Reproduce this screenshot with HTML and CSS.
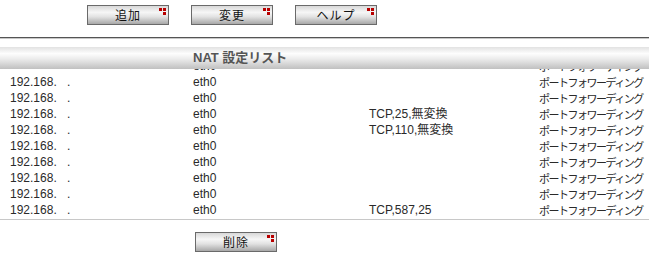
FILE: index.html
```html
<!DOCTYPE html>
<html>
<head>
<meta charset="utf-8">
<link rel="stylesheet" href="styles.css">
</head>
<body>
<div class="toolbar">
  <button class="btn"><span class="lbl">追加</span><svg class="mark" viewBox="0 0 7 7" width="7" height="7"><rect x="0" y="0" width="3" height="3"/><rect x="4" y="0" width="3" height="3"/><rect x="4" y="4" width="3" height="3"/></svg></button>
  <button class="btn"><span class="lbl">変更</span><svg class="mark" viewBox="0 0 7 7" width="7" height="7"><rect x="0" y="0" width="3" height="3"/><rect x="4" y="0" width="3" height="3"/><rect x="4" y="4" width="3" height="3"/></svg></button>
  <button class="btn"><span class="lbl">ヘルプ</span><svg class="mark" viewBox="0 0 7 7" width="7" height="7"><rect x="0" y="0" width="3" height="3"/><rect x="4" y="0" width="3" height="3"/><rect x="4" y="4" width="3" height="3"/></svg></button>
</div>
<div class="rule"></div>
<div class="list">
  <div class="list-head"><span class="title">NAT 設定リスト</span></div>
  <div class="rows">
    <div class="row"><span class="ip"></span><span class="if">eth0</span><span class="pr"></span><span class="ty">ポートフォワーディング</span></div>
    <div class="row"><span class="ip"><span class="oct">192.168.</span>.</span><span class="if">eth0</span><span class="pr"></span><span class="ty">ポートフォワーディング</span></div>
    <div class="row"><span class="ip"><span class="oct">192.168.</span>.</span><span class="if">eth0</span><span class="pr"></span><span class="ty">ポートフォワーディング</span></div>
    <div class="row"><span class="ip"><span class="oct">192.168.</span>.</span><span class="if">eth0</span><span class="pr">TCP,25,無変換</span><span class="ty">ポートフォワーディング</span></div>
    <div class="row"><span class="ip"><span class="oct">192.168.</span>.</span><span class="if">eth0</span><span class="pr">TCP,110,無変換</span><span class="ty">ポートフォワーディング</span></div>
    <div class="row"><span class="ip"><span class="oct">192.168.</span>.</span><span class="if">eth0</span><span class="pr"></span><span class="ty">ポートフォワーディング</span></div>
    <div class="row"><span class="ip"><span class="oct">192.168.</span>.</span><span class="if">eth0</span><span class="pr"></span><span class="ty">ポートフォワーディング</span></div>
    <div class="row"><span class="ip"><span class="oct">192.168.</span>.</span><span class="if">eth0</span><span class="pr"></span><span class="ty">ポートフォワーディング</span></div>
    <div class="row"><span class="ip"><span class="oct">192.168.</span>.</span><span class="if">eth0</span><span class="pr"></span><span class="ty">ポートフォワーディング</span></div>
    <div class="row"><span class="ip"><span class="oct">192.168.</span>.</span><span class="if">eth0</span><span class="pr">TCP,587,25</span><span class="ty">ポートフォワーディング</span></div>
  </div>
</div>
<div class="footer">
  <button class="btn"><span class="lbl">削除</span><svg class="mark" viewBox="0 0 7 7" width="7" height="7"><rect x="0" y="0" width="3" height="3"/><rect x="4" y="0" width="3" height="3"/><rect x="4" y="4" width="3" height="3"/></svg></button>
</div>
</body>
</html>
```
FILE: styles.css
```css
html, body {
  margin: 0;
  padding: 0;
  background: #ffffff;
  font-family: "Liberation Sans", "Noto Sans CJK JP", sans-serif;
  font-size: 12px;
  color: #2a2a2a;
}

.toolbar {
  display: flex;
  gap: 22px;
  padding: 5px 0 0 87px;
  height: 27px;
}

.btn {
  position: relative;
  width: 82px;
  height: 20px;
  margin: 0;
  padding: 0;
  border: 1px solid #6a6a6a;
  background: linear-gradient(to bottom, #d8d8d8 0%, #f6f6f6 35%, #e2e2e2 60%, #a8a8a8 100%);
  font-family: "Noto Sans CJK JP", sans-serif;
  font-size: 12px;
  color: #111111;
  display: flex;
  align-items: center;
  justify-content: center;
  box-sizing: border-box;
}

.lbl {
  line-height: 1;
  letter-spacing: 1px;
}

.mark {
  position: absolute;
  top: 2px;
  right: 2px;
  fill: #b80000;
}

.rule {
  height: 1px;
  background: #555555;
  border-bottom: 1px solid #c8c8c8;
  margin-top: 5px;
}

.list {
  position: relative;
  margin-top: 8px;
  height: 172px;
  overflow: hidden;
  border-bottom: 1px solid #c8c8c8;
}

.list-head {
  position: absolute;
  left: 0;
  right: 0;
  top: 0;
  height: 22px;
  background: linear-gradient(to bottom, #e2e2e2 0%, #fdfdfd 30%, #ebebeb 55%, #c0c0c0 100%);
  z-index: 1;
}

.title {
  position: absolute;
  left: 193px;
  top: 4px;
  font-family: "Liberation Sans", "Noto Sans CJK JP", sans-serif;
  font-weight: bold;
  font-size: 13px;
  color: #555555;
  line-height: 14px;
}

.rows {
  padding-top: 11px;
}

.row {
  display: grid;
  grid-template-columns: 183px 176px 170px 1fr;
  height: 16px;
  line-height: 16px;
  padding-left: 10px;
  white-space: nowrap;
}

.oct {
  display: inline-block;
  width: 57px;
}

.ty {
  font-family: "Noto Sans CJK JP", sans-serif;
  font-size: 11px;
  letter-spacing: -1.5px;
}

.footer {
  padding: 12px 0 0 195px;
}
```
